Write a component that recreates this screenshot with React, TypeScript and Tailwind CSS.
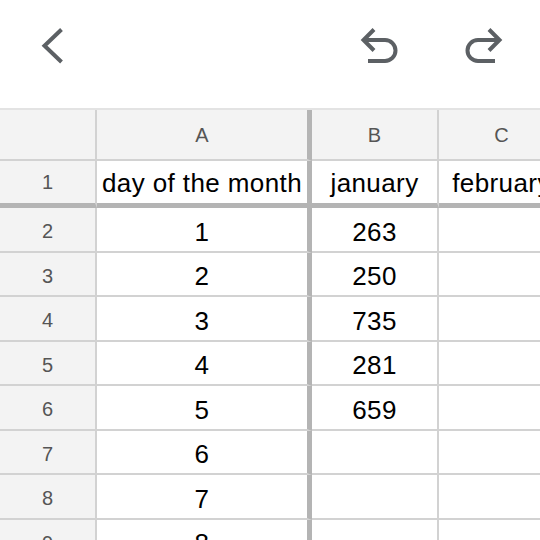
const rows: { n: number; a: string; b: string }[] = [
  { n: 2, a: "1", b: "263" },
  { n: 3, a: "2", b: "250" },
  { n: 4, a: "3", b: "735" },
  { n: 5, a: "4", b: "281" },
  { n: 6, a: "5", b: "659" },
  { n: 7, a: "6", b: "" },
  { n: 8, a: "7", b: "" },
  { n: 9, a: "8", b: "" },
];

function Icon({ d }: { d: string }) {
  return (
    <svg width="44" height="44" viewBox="0 0 44 44" fill="none">
      <path d={d} stroke="#5c6064" strokeWidth="4" strokeLinejoin="miter" strokeLinecap="butt" />
    </svg>
  );
}

function Toolbar() {
  return (
    <div className="flex h-[110px] shrink-0 items-start border-b-2 border-[#e3e3e3] bg-white pt-[24px] pr-[33px]">
      <div className="ml-[30px]">
        <Icon d="M31.5 5.5 L14.5 21.75 L31.5 38" />
      </div>
      <div className="ml-auto flex gap-[63px]">
        <Icon d="M18 5.5 L7.5 16 L18 26.5 M7.5 16 H29 A10.5 10.5 0 0 1 29 37 H12" />
        <Icon d="M26 5.5 L36.5 16 L26 26.5 M36.5 16 H15 A10.5 10.5 0 0 0 15 37 H32" />
      </div>
    </div>
  );
}

const thin = "border-[#d2d2d2]";

export default function App() {
  return (
    <div
      className="flex h-screen w-full flex-col overflow-hidden bg-white"
      style={{ fontFamily: '"Liberation Sans", Arial, sans-serif' }}
    >
      <Toolbar />
      <div className="flex flex-col">
        {/* column headers */}
        <div className="flex h-[51px] bg-[#f3f3f3] text-[20px] text-[#555]">
          <div className={`w-[97px] shrink-0 border-r-2 border-b-2 ${thin}`} />
          <div className={`flex w-[215px] shrink-0 items-center justify-center border-r-[5px] border-b-2 ${thin} border-r-[#b4b4b4]`}>
            A
          </div>
          <div className={`flex w-[127px] shrink-0 items-center justify-center border-r-2 border-b-2 ${thin}`}>
            B
          </div>
          <div className={`flex w-[127px] shrink-0 items-center justify-center border-r-2 border-b-2 ${thin}`}>
            C
          </div>
        </div>

        {/* frozen row 1 */}
        <div className="flex h-[47px] text-[26px] tracking-[0.4px] text-black">
          <div className={`flex w-[97px] shrink-0 items-center justify-center border-r-2 border-b-[5px] ${thin} border-b-[#b4b4b4] bg-[#f3f3f3] text-[20px] tracking-normal text-[#555]`}>
            1
          </div>
          <div className="flex w-[215px] shrink-0 items-center justify-center overflow-hidden whitespace-nowrap border-r-[5px] border-b-[5px] border-[#b4b4b4] pt-[2px]">
            day of the month
          </div>
          <div className={`flex w-[127px] shrink-0 items-center justify-center overflow-hidden whitespace-nowrap border-r-2 border-b-[5px] ${thin} border-b-[#b4b4b4] pt-[2px]`}>
            january
          </div>
          <div className={`flex w-[127px] shrink-0 items-center justify-center overflow-hidden whitespace-nowrap border-r-2 border-b-[5px] ${thin} border-b-[#b4b4b4] pt-[2px]`}>
            <span className="shrink-0">february</span>
          </div>
        </div>

        {rows.map((r) => (
          <div key={r.n} className="flex h-[44.5px] shrink-0 text-[26px] tracking-[0.4px] text-black">
            <div className={`flex w-[97px] shrink-0 items-center justify-center border-r-2 border-b-2 ${thin} bg-[#f3f3f3] pt-[4px] text-[20px] tracking-normal text-[#555]`}>
              {r.n}
            </div>
            <div className={`flex w-[215px] shrink-0 items-center justify-center border-r-[5px] border-b-2 ${thin} border-r-[#b4b4b4] pt-[6px]`}>
              {r.a}
            </div>
            <div className={`flex w-[127px] shrink-0 items-center justify-center border-r-2 border-b-2 ${thin} pt-[6px]`}>
              {r.b}
            </div>
            <div className={`w-[127px] shrink-0 border-r-2 border-b-2 ${thin}`} />
          </div>
        ))}
      </div>
    </div>
  );
}
